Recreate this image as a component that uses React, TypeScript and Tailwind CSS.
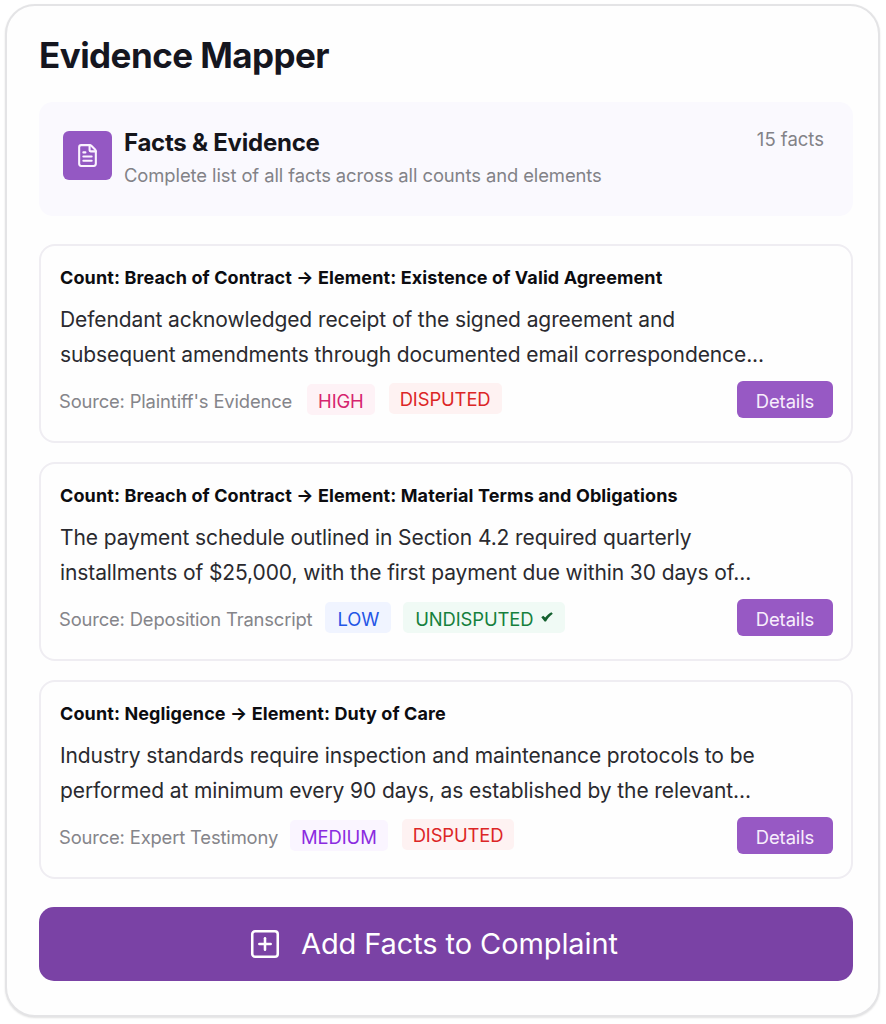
import { FileText, SquarePlus } from "lucide-react";

type Fact = {
  path: string;
  lines: string[];
  source: string;
  level: "HIGH" | "MEDIUM" | "LOW";
  disputed: boolean;
};

const facts: Fact[] = [
  {
    path: "Count: Breach of Contract → Element: Existence of Valid Agreement",
    lines: [
      "Defendant acknowledged receipt of the signed agreement and",
      "subsequent amendments through documented email correspondence...",
    ],
    source: "Source: Plaintiff's Evidence",
    level: "HIGH",
    disputed: true,
  },
  {
    path: "Count: Breach of Contract → Element: Material Terms and Obligations",
    lines: [
      "The payment schedule outlined in Section 4.2 required quarterly",
      "installments of $25,000, with the first payment due within 30 days of...",
    ],
    source: "Source: Deposition Transcript",
    level: "LOW",
    disputed: false,
  },
  {
    path: "Count: Negligence → Element: Duty of Care",
    lines: [
      "Industry standards require inspection and maintenance protocols to be",
      "performed at minimum every 90 days, as established by the relevant...",
    ],
    source: "Source: Expert Testimony",
    level: "MEDIUM",
    disputed: true,
  },
];

const levelStyle = {
  HIGH: "ml-[15px] px-[11px] bg-[#fef2f6] text-[#d6246e]",
  MEDIUM: "ml-[12px] px-[11px] bg-[#faf5ff] text-[#8b2be0]",
  LOW: "ml-[13px] px-[12px] bg-[#f0f4ff] text-[#2456e6]",
};

function CheckMark() {
  return (
    <svg viewBox="0 0 12 10" className="mb-[4px] ml-[8px] h-[10px] w-[12px] fill-[#14602f]">
      <path d="M0.3 5.3 L2.2 3.8 L4.2 5.6 C6 3.2 8 1.5 10.4 0.2 L11.8 1.7 C8.8 3.9 6.8 6.3 5 9.4 L3.6 9.4 Z" />
    </svg>
  );
}

function FactCard({ fact }: { fact: Fact }) {
  return (
    <div className="h-[199px] rounded-[16px] border-2 border-[#efedf2] pt-[19px] pr-[18px] pl-[19px]">
      <h3 className="text-[18px] leading-[26px] font-bold tracking-[0.11px] whitespace-nowrap text-[#0c0c10]">
        {fact.path}
      </h3>
      <div className="mt-[11px] text-[21px] leading-[35px] tracking-[-0.1px] whitespace-nowrap text-[#2a2a2f]">
        {fact.lines.map((line) => (
          <p key={line}>{line}</p>
        ))}
      </div>
      <div className="mt-[8px] flex items-start text-[18.4px] leading-[31px] tracking-[-0.1px]">
        <span className="mt-[6px] -ml-px tracking-[-0.16px] whitespace-nowrap text-[#85858a]">
          {fact.source}
        </span>
        <span className={"mt-[4px] h-[31px] rounded-[5px] pt-[2px] " + levelStyle[fact.level]}>
          {fact.level}
        </span>
        {fact.disputed ? (
          <span className="mt-[3px] ml-[14px] h-[31px] rounded-[5px] bg-[#fef2f2] px-[11px] pt-px text-[#dc2626]">
            DISPUTED
          </span>
        ) : (
          <span className="mt-[4px] ml-[12px] flex h-[31px] items-center rounded-[5px] bg-[#f0faf5] px-[12px] pt-[3px] text-[#15803d]">
            UNDISPUTED
            <CheckMark />
          </span>
        )}
        <button className="mt-px ml-auto h-[37px] w-[96px] rounded-[6px] bg-[#9759c4] pt-[4px] text-[#f7eefc]">
          Details
        </button>
      </div>
    </div>
  );
}

export default function App() {
  return (
    <div className="h-[1024px] w-[886px] bg-white pt-[4px] pl-[5px] font-['Inter',sans-serif]">
      <div className="h-[1013px] w-[875px] rounded-[30px] border-2 border-[#e4e4e6] bg-[#fefefe] px-[32px] shadow-[0_1px_2px_rgba(0,0,0,0.12)]">
        <h1 className="pt-[26px] text-[35px] leading-[46px] font-bold tracking-[-0.55px] whitespace-nowrap text-[#15161f]">
          Evidence Mapper
        </h1>

        <div className="mt-[24px] flex h-[114px] w-[814px] items-start rounded-[14px] bg-[#faf9fe] pr-[29px] pl-[24px]">
          <div className="mt-[29px] flex size-[49px] items-center justify-center rounded-[6px] bg-[#9458c3]">
            <FileText className="size-[25px] text-[#fbf3ff]" strokeWidth={2} />
          </div>
          <div className="mt-[24px] ml-[12px] whitespace-nowrap">
            <h2 className="text-[24px] leading-[34px] font-bold tracking-[-0.25px] text-[#15151b]">
              Facts &amp; Evidence
            </h2>
            <p className="text-[18.4px] leading-[30px] tracking-[-0.08px] text-[#828287]">
              Complete list of all facts across all counts and elements
            </p>
          </div>
          <span className="mt-[22px] ml-auto text-[18.5px] leading-[30px] text-[#828287]">15 facts</span>
        </div>

        <div className="mt-[28px] flex w-[814px] flex-col gap-[19px]">
          {facts.map((fact) => (
            <FactCard key={fact.path} fact={fact} />
          ))}
        </div>

        <button className="mt-[28px] flex h-[74px] w-[814px] items-center rounded-[15px] bg-[#7a42a5] pb-px pl-[209px] text-[29px] tracking-[-0.1px] text-white">
          <SquarePlus className="size-[34px]" strokeWidth={1.8} />
          <span className="ml-[19px] whitespace-nowrap">Add Facts to Complaint</span>
        </button>
      </div>
    </div>
  );
}
